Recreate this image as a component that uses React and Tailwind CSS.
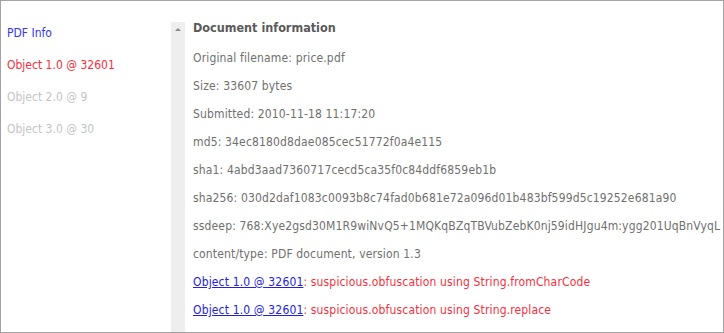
const navItems = [
  { label: 'PDF Info', cls: 'text-[#3535f5]' },
  { label: 'Object 1.0 @ 32601', cls: 'text-[#f5303c]' },
  { label: 'Object 2.0 @ 9', cls: 'text-[#c4c4c4]' },
  { label: 'Object 3.0 @ 30', cls: 'text-[#c4c4c4]' },
];

const info = [
  ['Original filename', 'price.pdf'],
  ['Size', '33607 bytes'],
  ['Submitted', '2010-11-18 11:17:20'],
  ['md5', '34ec8180d8dae085cec51772f0a4e115'],
  ['sha1', '4abd3aad7360717cecd5ca35f0c84ddf6859eb1b'],
  ['sha256', '030d2daf1083c0093b8c74fad0b681e72a096d01b483bf599d5c19252e681a90'],
  ['ssdeep', '768:Xye2gsd30M1R9wiNvQ5+1MQKqBZqTBVubZebK0nj59idHJgu4m:ygg201UqBnVyqL'],
  ['content/type', 'PDF document, version 1.3'],
];

const findings = [
  'suspicious.obfuscation using String.fromCharCode',
  'suspicious.obfuscation using String.replace',
];

export default function App() {
  return (
    <div className="w-[724px] h-[333px] bg-white border border-[#a3a3a3] flex font-['DejaVu_Sans_Condensed',sans-serif] text-[12px] overflow-hidden">
      {/* left nav */}
      <div className="w-[170px] shrink-0 pl-[6px] pt-[24px] flex flex-col gap-[15px]">
        {navItems.map((item) => (
          <a key={item.label} className={`leading-[17px] ${item.cls}`}>
            {item.label}
          </a>
        ))}
      </div>

      {/* details pane */}
      <div className="flex flex-1 pt-[21px]">
        <div className="w-[14px] shrink-0 bg-[#eeeeee] flex justify-center pt-[6px]">
          <span className="block w-0 h-0 border-x-[3px] border-x-transparent border-b-[3px] border-b-[#888]" />
        </div>
        <div className="pl-[8px] text-[#6f6f6f] tracking-[0.15px]">
          <h2 className="text-[12.5px] font-bold text-[#5a5a5a] leading-[12px] tracking-normal">Document information</h2>
          <div className="flex flex-col gap-[11px] mt-[16px]">
            {info.map(([k, v]) => (
              <p key={k} className="leading-[17px] whitespace-nowrap">
                {k}: {v}
              </p>
            ))}
            {findings.map((f) => (
              <p key={f} className="leading-[17px] whitespace-nowrap text-[#f5303c]">
                <a className="text-[#2222dd] underline">Object 1.0 @ 32601</a>: {f}
              </p>
            ))}
          </div>
        </div>
      </div>
    </div>
  );
}
